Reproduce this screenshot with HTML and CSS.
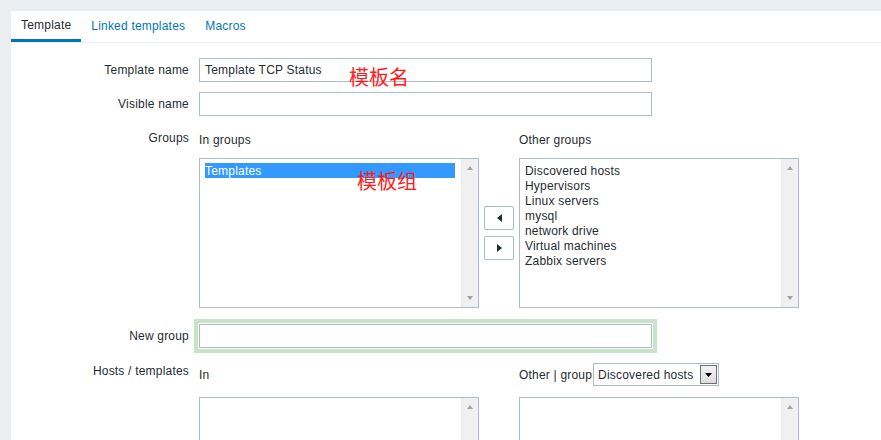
FILE: index.html
```html
<!DOCTYPE html>
<html lang="en">
<head>
    <meta charset="UTF-8">
    <title>Template</title>
    <link rel="stylesheet" href="styles.css">
</head>
<body>
    <div class="card">
        <ul class="tabs">
            <li class="tab active">Template</li>
            <li class="tab">Linked templates</li>
            <li class="tab">Macros</li>
        </ul>

        <div class="form">
            <div class="form-row">
                <div class="form-label">Template name</div>
                <div class="form-field"><div class="text-input">Template TCP Status</div></div>
            </div>

            <div class="form-row">
                <div class="form-label">Visible name</div>
                <div class="form-field"><div class="text-input"></div></div>
            </div>

            <div class="form-row groups-row">
                <div class="form-label label-top">Groups</div>
                <div class="form-field twin">
                    <div class="twin-head">In groups</div>
                    <div></div>
                    <div class="twin-head">Other groups</div>

                    <div class="listbox">
                        <div class="list-items">
                            <div class="list-item selected">Templates</div>
                        </div>
                        <div class="scrollbar"><span class="sb-up"></span><span class="sb-down"></span></div>
                    </div>
                    <div class="move-buttons">
                        <button class="move-button">
                            <svg width="5" height="8" viewBox="0 0 5 8"><polygon points="5,0 5,8 0,4" fill="#1f2c33"/></svg>
                        </button>
                        <button class="move-button">
                            <svg width="5" height="8" viewBox="0 0 5 8"><polygon points="0,0 0,8 5,4" fill="#1f2c33"/></svg>
                        </button>
                    </div>
                    <div class="listbox">
                        <div class="list-items">
                            <div class="list-item">Discovered hosts</div>
                            <div class="list-item">Hypervisors</div>
                            <div class="list-item">Linux servers</div>
                            <div class="list-item">mysql</div>
                            <div class="list-item">network drive</div>
                            <div class="list-item">Virtual machines</div>
                            <div class="list-item">Zabbix servers</div>
                        </div>
                        <div class="scrollbar"><span class="sb-up"></span><span class="sb-down"></span></div>
                    </div>
                </div>
            </div>

            <div class="form-row new-group-row">
                <div class="form-label">New group</div>
                <div class="form-field"><div class="text-input focused"></div></div>
            </div>

            <div class="form-row hosts-row">
                <div class="form-label label-top">Hosts / templates</div>
                <div class="form-field twin">
                    <div class="twin-head tall">In</div>
                    <div></div>
                    <div class="twin-head tall">
                        Other | group
                        <div class="select">
                            <span class="select-text">Discovered hosts</span>
                            <span class="select-arrow">
                                <svg width="7" height="4" viewBox="0 0 7 4"><polygon points="0,0 7,0 3.5,4" fill="#000"/></svg>
                            </span>
                        </div>
                    </div>

                    <div class="listbox">
                        <div class="list-items"></div>
                        <div class="scrollbar"><span class="sb-up"></span><span class="sb-down"></span></div>
                    </div>
                    <div class="move-buttons"></div>
                    <div class="listbox">
                        <div class="list-items"></div>
                        <div class="scrollbar"><span class="sb-up"></span><span class="sb-down"></span></div>
                    </div>
                </div>
            </div>
        </div>

        <!-- red notes drawn over the screenshot -->
        <div class="note note-name">模板名</div>
        <div class="note note-group">模板组</div>
    </div>
</body>
</html>
```

FILE: styles.css
```css
/* Base */
* {
    margin: 0;
    padding: 0;
    box-sizing: border-box;
}

body {
    font-family: 'Liberation Sans', Arial, sans-serif;
    font-size: 12px;
    letter-spacing: 0.2px;
    color: #1f2c33;
    background-color: #ebeef0;
    overflow: hidden;
}

/* White card */
.card {
    position: relative;
    margin: 11px 0 0 11px;
    background-color: #fff;
    height: 440px;
}

/* Tabs */
.tabs {
    list-style: none;
    display: flex;
    height: 32px;
    border-bottom: 1px solid #ebeef0;
}

.tab {
    padding: 0 10px;
    line-height: 31px;
    color: #0275b8;
}

.tab.active {
    color: #1f2c33;
    border-bottom: 3px solid #0275b8;
    line-height: 28px;
}

/* Form layout */
.form {
    padding-top: 15px;
}

.form-row {
    display: flex;
    margin-top: 10px;
}

.form-row:first-child {
    margin-top: 0;
}

.new-group-row {
    margin-top: 16px;
}

.hosts-row {
    margin-top: 15px;
}

.form-label {
    width: 178px;
    margin-right: 10px;
    text-align: right;
    line-height: 24px;
}

.label-top {
    line-height: 14px;
    padding-top: 5px;
}

.hosts-row .label-top {
    padding-top: 1px;
}

.text-input {
    width: 453px;
    height: 24px;
    border: 1px solid #acbbc7;
    padding: 0 5px;
    line-height: 22px;
}

.text-input.focused {
    outline: 4px solid #c6e3c9;
    outline-offset: 1px;
}

/* Two list boxes side by side */
.twin {
    display: grid;
    grid-template-columns: 280px 40px 280px;
}

.twin-head {
    line-height: 14px;
    padding-top: 7px;
    margin-bottom: 11px;
}

.twin-head.tall {
    display: flex;
    align-items: center;
    height: 23px;
    padding-top: 0;
    margin-bottom: 11px;
}

.listbox {
    display: flex;
    height: 150px;
    border: 1px solid #acbbc7;
}

.list-items {
    flex-grow: 1;
    padding: 4px 6px 0 5px;
}

.list-item {
    line-height: 16px;
    height: 15px;
    white-space: nowrap;
}

.list-item.selected {
    background-color: #3399ff;
    color: #fff;
}

.scrollbar {
    position: relative;
    width: 17px;
    background-color: #f0f0f0;
    border-left: 1px solid #e8e8e8;
}

.sb-up,
.sb-down {
    position: absolute;
    left: 5px;
    width: 0;
    height: 0;
    border-left: 3.5px solid transparent;
    border-right: 3.5px solid transparent;
}

.sb-up {
    top: 7px;
    border-bottom: 4px solid #a3a3a3;
}

.sb-down {
    bottom: 7px;
    border-top: 4px solid #a3a3a3;
}

.move-buttons {
    display: flex;
    flex-direction: column;
    justify-content: center;
    align-items: center;
    gap: 6px;
}

.move-button {
    display: flex;
    align-items: center;
    justify-content: center;
    width: 30px;
    height: 24px;
    background-color: #fff;
    border: 1px solid #acbbc7;
    border-radius: 2px;
}

/* Drop-down */
.select {
    display: flex;
    align-items: center;
    justify-content: space-between;
    width: 126px;
    height: 23px;
    margin-left: 1px;
    border: 1px solid #acbbc7;
    padding: 0 1px 0 4px;
}

.select-arrow {
    display: flex;
    align-items: center;
    justify-content: center;
    width: 17px;
    height: 19px;
    border: 1px solid #707070;
    background: linear-gradient(#f4f4f4, #dcdcdc);
}

/* Red notes laid over the form */
.note {
    position: absolute;
    font-family: 'Noto Sans CJK SC', sans-serif;
    font-size: 20px;
    line-height: 20px;
    letter-spacing: 0;
    color: #ff1a1a;
}

.note-name {
    left: 338px;
    top: 56px;
}

.note-group {
    left: 346px;
    top: 160px;
}
```
